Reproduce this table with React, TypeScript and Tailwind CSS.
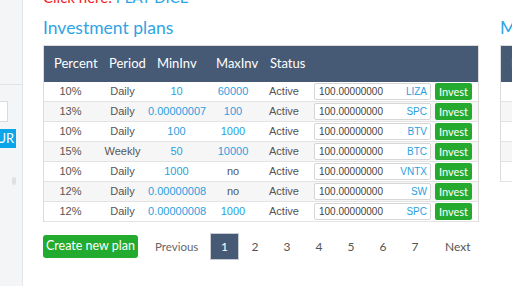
import React from 'react';

interface Plan {
  percent: string;
  period: string;
  minInv: string;
  maxInv: string;
  coin: string;
}

const plans: Plan[] = [
  { percent: '10%', period: 'Daily', minInv: '10', maxInv: '60000', coin: 'LIZA' },
  { percent: '13%', period: 'Daily', minInv: '0.00000007', maxInv: '100', coin: 'SPC' },
  { percent: '10%', period: 'Daily', minInv: '100', maxInv: '1000', coin: 'BTV' },
  { percent: '15%', period: 'Weekly', minInv: '50', maxInv: '10000', coin: 'BTC' },
  { percent: '10%', period: 'Daily', minInv: '1000', maxInv: 'no', coin: 'VNTX' },
  { percent: '12%', period: 'Daily', minInv: '0.00000008', maxInv: 'no', coin: 'SW' },
  { percent: '12%', period: 'Daily', minInv: '0.00000008', maxInv: '1000', coin: 'SPC' },
];

const pages = ['2', '3', '4', '5', '6', '7'];

const cols = 'grid grid-cols-[53px_51px_57px_56px_46px_125px_1fr]';
const head = "font-['Lato',sans-serif]";
const body = "font-['Liberation_Sans',Arial,sans-serif]";

function Sidebar() {
  return (
    <aside className="w-[23px] shrink-0 bg-[#f4f5f7] border-r border-[#e4e5e8] overflow-hidden">
      <div className="h-[85px] border-b border-[#e2e3e6]" />
      <div className="mt-[16px] -ml-[12px] w-[20px] h-[21px] bg-white border border-[#d9dbe0]" />
      <div className={`mt-[7px] -ml-[14px] w-[30px] h-[19px] bg-[#0aa6e9] text-white text-[13px] leading-[19px] text-right pr-[4px] ${head}`}>
        OUR
      </div>
      <div className="mt-[29px] ml-[12px] w-[4px] h-[8px] rounded-[2px] bg-[#dfe1e5]" />
    </aside>
  );
}

function PlanRow({ plan, index }: { plan: Plan; index: number }) {
  return (
    <div
      className={`${cols} h-[20px] border-b border-[#e3e3e3] items-center text-[11px] text-[#555] ${body} ${
        index % 2 === 1 ? 'bg-[#f6f6f6]' : 'bg-white'
      }`}
    >
      <div className="text-center">{plan.percent}</div>
      <div className="text-center">{plan.period}</div>
      <div className="text-center text-[#2a9fe0]">{plan.minInv}</div>
      <div className={`text-center ${plan.maxInv === 'no' ? '' : 'text-[#2a9fe0]'}`}>{plan.maxInv}</div>
      <div className="text-center">Active</div>
      <div className="pl-[7px]">
        <div className="w-[117px] h-[17px] bg-white border border-[#d6d6d6] rounded-[2px] flex items-center justify-between pl-[4px] pr-[3px] text-[10px]">
          <span className="text-[#444]">100.00000000</span>
          <span className="text-[#2a9fe0]">{plan.coin}</span>
        </div>
      </div>
      <div className="pl-[3px]">
        <button className={`w-[37px] h-[17px] bg-[#25aa30] rounded-[2px] text-white text-[11px] leading-[17px] ${head}`}>
          Invest
        </button>
      </div>
    </div>
  );
}

export default function App() {
  return (
    <div className="w-[512px] h-[286px] overflow-hidden flex bg-white">
      <Sidebar />

      <main className="flex-1 pl-[20px] overflow-hidden">
        <div className="flex gap-[21px]">
          <section className="w-[436px] shrink-0">
            <p className={`-mt-[12px] text-[15px] leading-[18px] whitespace-nowrap ${head}`}>
              <span className="text-[#f01e1e]">Click here: </span>
              <span className="text-[#2aa3e6]">PLAY DICE</span>
            </p>
            <h2 className={`mt-[10px] text-[17.5px] leading-[24px] text-[#2ea4e4] whitespace-nowrap ${head}`}>
              Investment plans
            </h2>

            <div className="mt-[5px] border-x border-t border-[#dcdcdc]">
              <div className={`${cols} h-[36px] bg-[#465a75] items-center text-white text-[13px] whitespace-nowrap ${head}`}>
                <div className="pl-[10px]">Percent</div>
                <div className="pl-[12px]">Period</div>
                <div className="pl-[9px]">MinInv</div>
                <div className="pl-[11px]">MaxInv</div>
                <div className="pl-[9px]">Status</div>
                <div />
                <div />
              </div>
              {plans.map((plan, i) => (
                <PlanRow key={i} plan={plan} index={i} />
              ))}
            </div>

            <div className={`mt-[11px] h-[27px] flex items-center text-[12px] text-[#555] ${head}`}>
              <button className="w-[95px] h-[23px] bg-[#22ab2f] rounded-[3px] text-white text-[12.5px]">
                Create new plan
              </button>
              <span className="ml-[17px] w-[55px] text-[11.5px] text-[#666]">Previous</span>
              <span className="w-[29px] h-[27px] bg-[#465a75] border border-[#c9ccd2] text-white flex items-center justify-center">
                1
              </span>
              {pages.map((p) => (
                <span key={p} className="w-[32px] text-center">
                  {p}
                </span>
              ))}
              <span className="ml-[14px]">Next</span>
            </div>
          </section>

          <section className="w-[200px] shrink-0">
            <div className="h-[6px]" />
            <h2 className={`mt-[10px] text-[17.5px] leading-[24px] text-[#2ea4e4] whitespace-nowrap ${head}`}>
              My deposits
            </h2>
            <div className="mt-[5px] border-x border-t border-[#dcdcdc]">
              <div className={`h-[36px] bg-[#465a75] flex items-center pl-[10px] text-white text-[13px] ${head}`}>
                Date
              </div>
              {[0, 1, 2, 3, 4].map((i) => (
                <div
                  key={i}
                  className={`h-[20px] border-b border-[#e3e3e3] ${i % 2 === 1 ? 'bg-[#f6f6f6]' : 'bg-white'}`}
                />
              ))}
            </div>
          </section>
        </div>
      </main>
    </div>
  );
}
